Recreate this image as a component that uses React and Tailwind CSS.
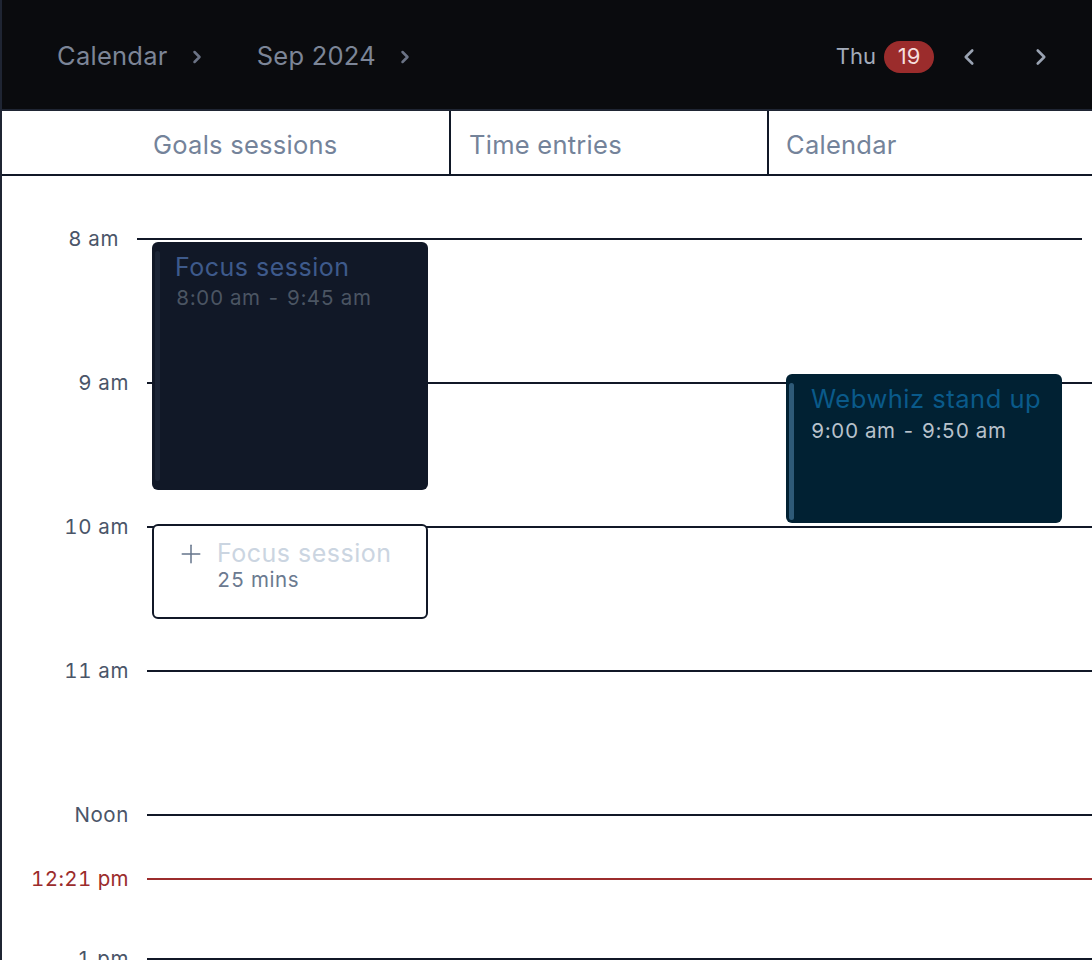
import {ChevronRight, ChevronLeft, Plus} from 'lucide-react';

const HOURS = [
  {label: '8 am', shift: true},
  {label: '9 am'},
  {label: '10 am'},
  {label: '11 am'},
  {label: 'Noon'},
  {label: '1 pm'},
];

function Header() {
  return (
    <header className="flex h-[111px] items-center justify-between border-b-2 border-[#1f2533] bg-[#0a0b0e] pl-[55px] pr-[38px] pt-1">
      <nav className="flex items-center text-[25.5px] tracking-[0.01em] text-[#7c8597]">
        <span>Calendar</span>
        <ChevronRight size={20} strokeWidth={3} className="ml-[19px] text-[#6b7385]" />
        <span className="ml-[50px]">Sep 2024</span>
        <ChevronRight size={20} strokeWidth={3} className="ml-[19px] text-[#6b7385]" />
      </nav>
      <div className="flex items-center">
        <span className="text-[22px] text-[#a3acba]">Thu</span>
        <span className="ml-2 flex h-8 w-[50px] items-center justify-center rounded-full bg-[#9b2c2c] text-[22px] text-[#f5dede]">
          19
        </span>
        <button className="ml-[22px] text-[#9aa3b2]">
          <ChevronLeft size={26} strokeWidth={2.4} />
        </button>
        <button className="ml-[46px] text-[#9aa3b2]">
          <ChevronRight size={26} strokeWidth={2.4} />
        </button>
      </div>
    </header>
  );
}

function Tabs() {
  return (
    <div className="flex h-[65px] border-b-2 border-[#111827] text-[25.5px] tracking-[0.01em] text-[#74839a]">
      <div className="flex w-[449px] items-center border-r-2 border-[#111827] pl-[151px] pt-[5px]">
        Goals sessions
      </div>
      <div className="flex w-[318px] items-center border-r-2 border-[#111827] pl-[18px] pt-[5px]">
        Time entries
      </div>
      <div className="flex flex-1 items-center pl-[17px] pt-[5px]">Calendar</div>
    </div>
  );
}

function HourRow({label, shift}) {
  return (
    <div className="flex h-36 flex-col">
      <div
        className={
          shift
            ? 'flex h-6 -mt-3 items-center -ml-[10px] mr-[10px]'
            : 'flex h-6 -mt-3 items-center'
        }
      >
        <span className="w-[127px] text-right text-[20.5px] tabular-nums tracking-[0.03em] text-[#4a5568]">
          {label}
        </span>
        <div className="ml-[18px] h-[2px] flex-1 bg-[#111827]" />
      </div>
    </div>
  );
}

function Grid() {
  return (
    <div className="relative pt-[63px]">
      {HOURS.map((h) => (
        <HourRow key={h.label} {...h} />
      ))}

      {/* now indicator */}
      <div className="absolute left-0 right-0 top-[703px] flex h-6 -translate-y-1/2 items-center">
        <span className="w-[127px] text-right text-[20.5px] tabular-nums tracking-[0.02em] text-[#9b2c2c]">
          12:21 pm
        </span>
        <div className="ml-[18px] h-[2px] flex-1 bg-[#9b2c2c]" />
      </div>

      <div className="absolute left-[150px] top-[66px] h-[248px] w-[276px] rounded-md bg-[#111827] pl-[23px] pt-[10px]">
        <div className="absolute bottom-[9px] left-[3px] top-[9px] w-[5px] rounded-full bg-[#1c2536]" />
        <div className="text-[25px] leading-[30px] tracking-[0.02em] text-[#3e5a8c]">
          Focus session
        </div>
        <div className="pl-[1px] text-[20.5px] leading-[32px] tabular-nums tracking-[0.03em] text-[#4b5563]">
          8:00 am - 9:45 am
        </div>
      </div>

      <div className="absolute left-[150px] top-[348px] flex h-[95px] w-[276px] rounded-md border-2 border-[#111827] bg-white pl-[22px] pt-[12px]">
        <Plus size={30} strokeWidth={1.2} className="mt-[1px] text-[#64748b]" />
        <div className="ml-[11px]">
          <div className="text-[25px] leading-[30px] tracking-[0.02em] text-[#cbd5e1]">
            Focus session
          </div>
          <div className="text-[20.5px] leading-6 tabular-nums tracking-[0.03em] text-[#6b7a90]">
            25 mins
          </div>
        </div>
      </div>

      <div className="absolute left-[784px] top-[198px] h-[149px] w-[276px] rounded-md bg-[#012133] pl-[25px] pt-[10px]">
        <div className="absolute bottom-[3px] left-[3px] top-[9px] w-[5px] rounded-full bg-[#2e5a78]" />
        <div className="text-[25.5px] leading-[30px] tracking-[0.02em] text-[#0a5a8a]">
          Webwhiz stand up
        </div>
        <div className="text-[20.5px] leading-[34px] tabular-nums tracking-[0.03em] text-[#b8c2cc]">
          9:00 am - 9:50 am
        </div>
      </div>
    </div>
  );
}

export default function App() {
  return (
    <div className="h-[960px] overflow-hidden border-l-2 border-[#1f2533] bg-white font-['Inter',sans-serif]">
      <Header />
      <Tabs />
      <Grid />
    </div>
  );
}
